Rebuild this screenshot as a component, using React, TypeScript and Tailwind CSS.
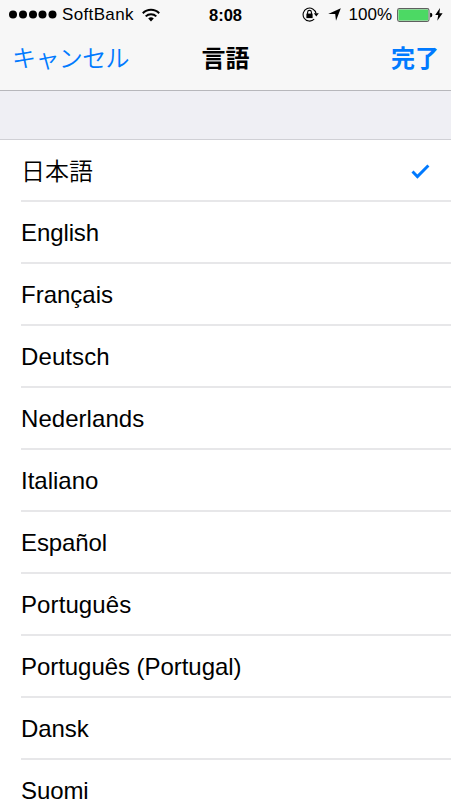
import { useState } from "react";

type Language = {
  code: string;
  label: string;
  className: string;
};

const languages: Language[] = [
  { code: "ja", label: "日本語", className: "pt-[2px] font-[350]" },
  { code: "en", label: "English", className: "tracking-[-0.1px]" },
  { code: "fr", label: "Français", className: "tracking-[0px]" },
  { code: "de", label: "Deutsch", className: "tracking-[0.1px]" },
  { code: "nl", label: "Nederlands", className: "tracking-[0.05px]" },
  { code: "it", label: "Italiano", className: "tracking-[0px]" },
  { code: "es", label: "Español", className: "tracking-[-0.1px]" },
  { code: "pt-BR", label: "Português", className: "tracking-[0.1px]" },
  { code: "pt", label: "Português (Portugal)", className: "tracking-[-0.05px]" },
  { code: "da", label: "Dansk", className: "tracking-[-0.1px]" },
  { code: "fi", label: "Suomi", className: "tracking-[-0.1px]" },
];

function SignalDots() {
  return (
    <svg width="48" height="9" viewBox="0 0 48 9" className="shrink-0">
      {[4, 14, 24, 33.5, 43.5].map((cx) => (
        <circle key={cx} cx={cx} cy="4.5" r="4" />
      ))}
    </svg>
  );
}

function WifiIcon() {
  return (
    <svg width="18" height="14" viewBox="0 0 18 14" fill="none" stroke="black" strokeWidth="2" className="shrink-0">
      <path d="M0.8 5.2 A11.6 11.6 0 0 1 17.2 5.2" />
      <path d="M3.7 8.4 A7.5 7.5 0 0 1 14.3 8.4" />
      <path d="M9 13.4 L6.2 10.6 A4 4 0 0 1 11.8 10.6 Z" fill="black" stroke="none" />
    </svg>
  );
}

function RotationLockIcon() {
  return (
    <svg width="17" height="15" viewBox="0 0 17 15" fill="none" stroke="black" className="shrink-0">
      <path d="M12.2 12.2 A6.5 6.5 0 1 1 14 6.4" strokeWidth="1.1" />
      <path d="M11.8 6.2 H16.8 L14.3 9.4 Z" fill="black" stroke="none" />
      <rect x="4.4" y="6.6" width="6.2" height="4.5" fill="black" stroke="none" />
      <path d="M5.6 7 V5.3 A1.9 1.9 0 0 1 9.4 5.3 V7" strokeWidth="1.1" />
    </svg>
  );
}

function LocationIcon() {
  return (
    <svg width="13" height="13" viewBox="0 0 13 13" className="shrink-0">
      <path d="M12.8 0.2 L8 12.7 L7.2 5.9 L0.2 5.9 Z" />
    </svg>
  );
}

function BatteryIcon() {
  return (
    <svg width="36" height="14" viewBox="0 0 36 14" className="shrink-0">
      <rect x="0.6" y="0.6" width="31.4" height="12.8" rx="1.8" fill="white" stroke="#5f5f5f" strokeWidth="1.1" />
      <rect x="1.4" y="1.4" width="29.8" height="11.2" rx="0.8" fill="#4cd964" />
      <path d="M33.1 4.8 A2.3 2.3 0 0 1 33.1 9.4 Z" />
    </svg>
  );
}

function BoltIcon() {
  return (
    <svg width="8" height="13" viewBox="0 0 8 13" className="shrink-0">
      <path d="M5 0 L0.2 7 H3.2 L2.3 12.8 L7.6 5.2 H4.4 Z" />
    </svg>
  );
}

function CheckIcon() {
  return (
    <svg width="19" height="15" viewBox="0 0 19 15" fill="none" stroke="#007aff" strokeWidth="2.9" className="shrink-0">
      <path d="M1.5 7.6 L6.4 12.6 L17.4 1.4" />
    </svg>
  );
}

function StatusBar() {
  return (
    <div className="grid h-7 grid-cols-[1fr_auto_1fr] items-center text-[17px] leading-7">
      <div className="flex items-center pl-[9px]">
        <SignalDots />
        <span className="ml-[5px] pt-px tracking-[0.35px]">SoftBank</span>
        <span className="ml-[8px]">
          <WifiIcon />
        </span>
      </div>
      <span className="text-[16.5px] font-bold tracking-[0px]">8:08</span>
      <div className="flex items-center justify-end pr-[8px]">
        <RotationLockIcon />
        <span className="ml-[9px]">
          <LocationIcon />
        </span>
        <span className="ml-[8px] pt-px">100%</span>
        <span className="ml-[5px]">
          <BatteryIcon />
        </span>
        <span className="ml-[2px]">
          <BoltIcon />
        </span>
      </div>
    </div>
  );
}

export default function App() {
  const [selected, setSelected] = useState("ja");

  return (
    <div className="h-[800px] w-[451px] overflow-hidden bg-white font-['Liberation_Sans','Noto_Sans_CJK_JP',sans-serif] text-black">
      <header className="h-[91px] border-b border-[#b7b7bb] bg-[#f7f7f7]">
        <StatusBar />
        <nav className="grid h-[62px] grid-cols-[1fr_auto_1fr] items-center px-[12px] text-[24px] leading-[62px]">
          <button className="text-left font-[350] tracking-[-0.6px] text-[#007aff]">キャンセル</button>
          <h1 className="font-bold">言語</h1>
          <button className="text-right font-bold text-[#007aff]">完了</button>
        </nav>
      </header>

      <div className="h-[49px] border-b border-[#d0d0d5] bg-[#efeff4]" />

      <ul>
        {languages.map((language) => (
          <li key={language.code} className="h-[62px] pl-[21px]" onClick={() => setSelected(language.code)}>
            <div className="flex h-full items-center justify-between border-b-2 border-[#e7e7e9] pt-[2px] pr-[21px]">
              <span className={`text-[24px] leading-5 ${language.className}`}>{language.label}</span>
              {selected === language.code && <CheckIcon />}
            </div>
          </li>
        ))}
      </ul>
    </div>
  );
}
